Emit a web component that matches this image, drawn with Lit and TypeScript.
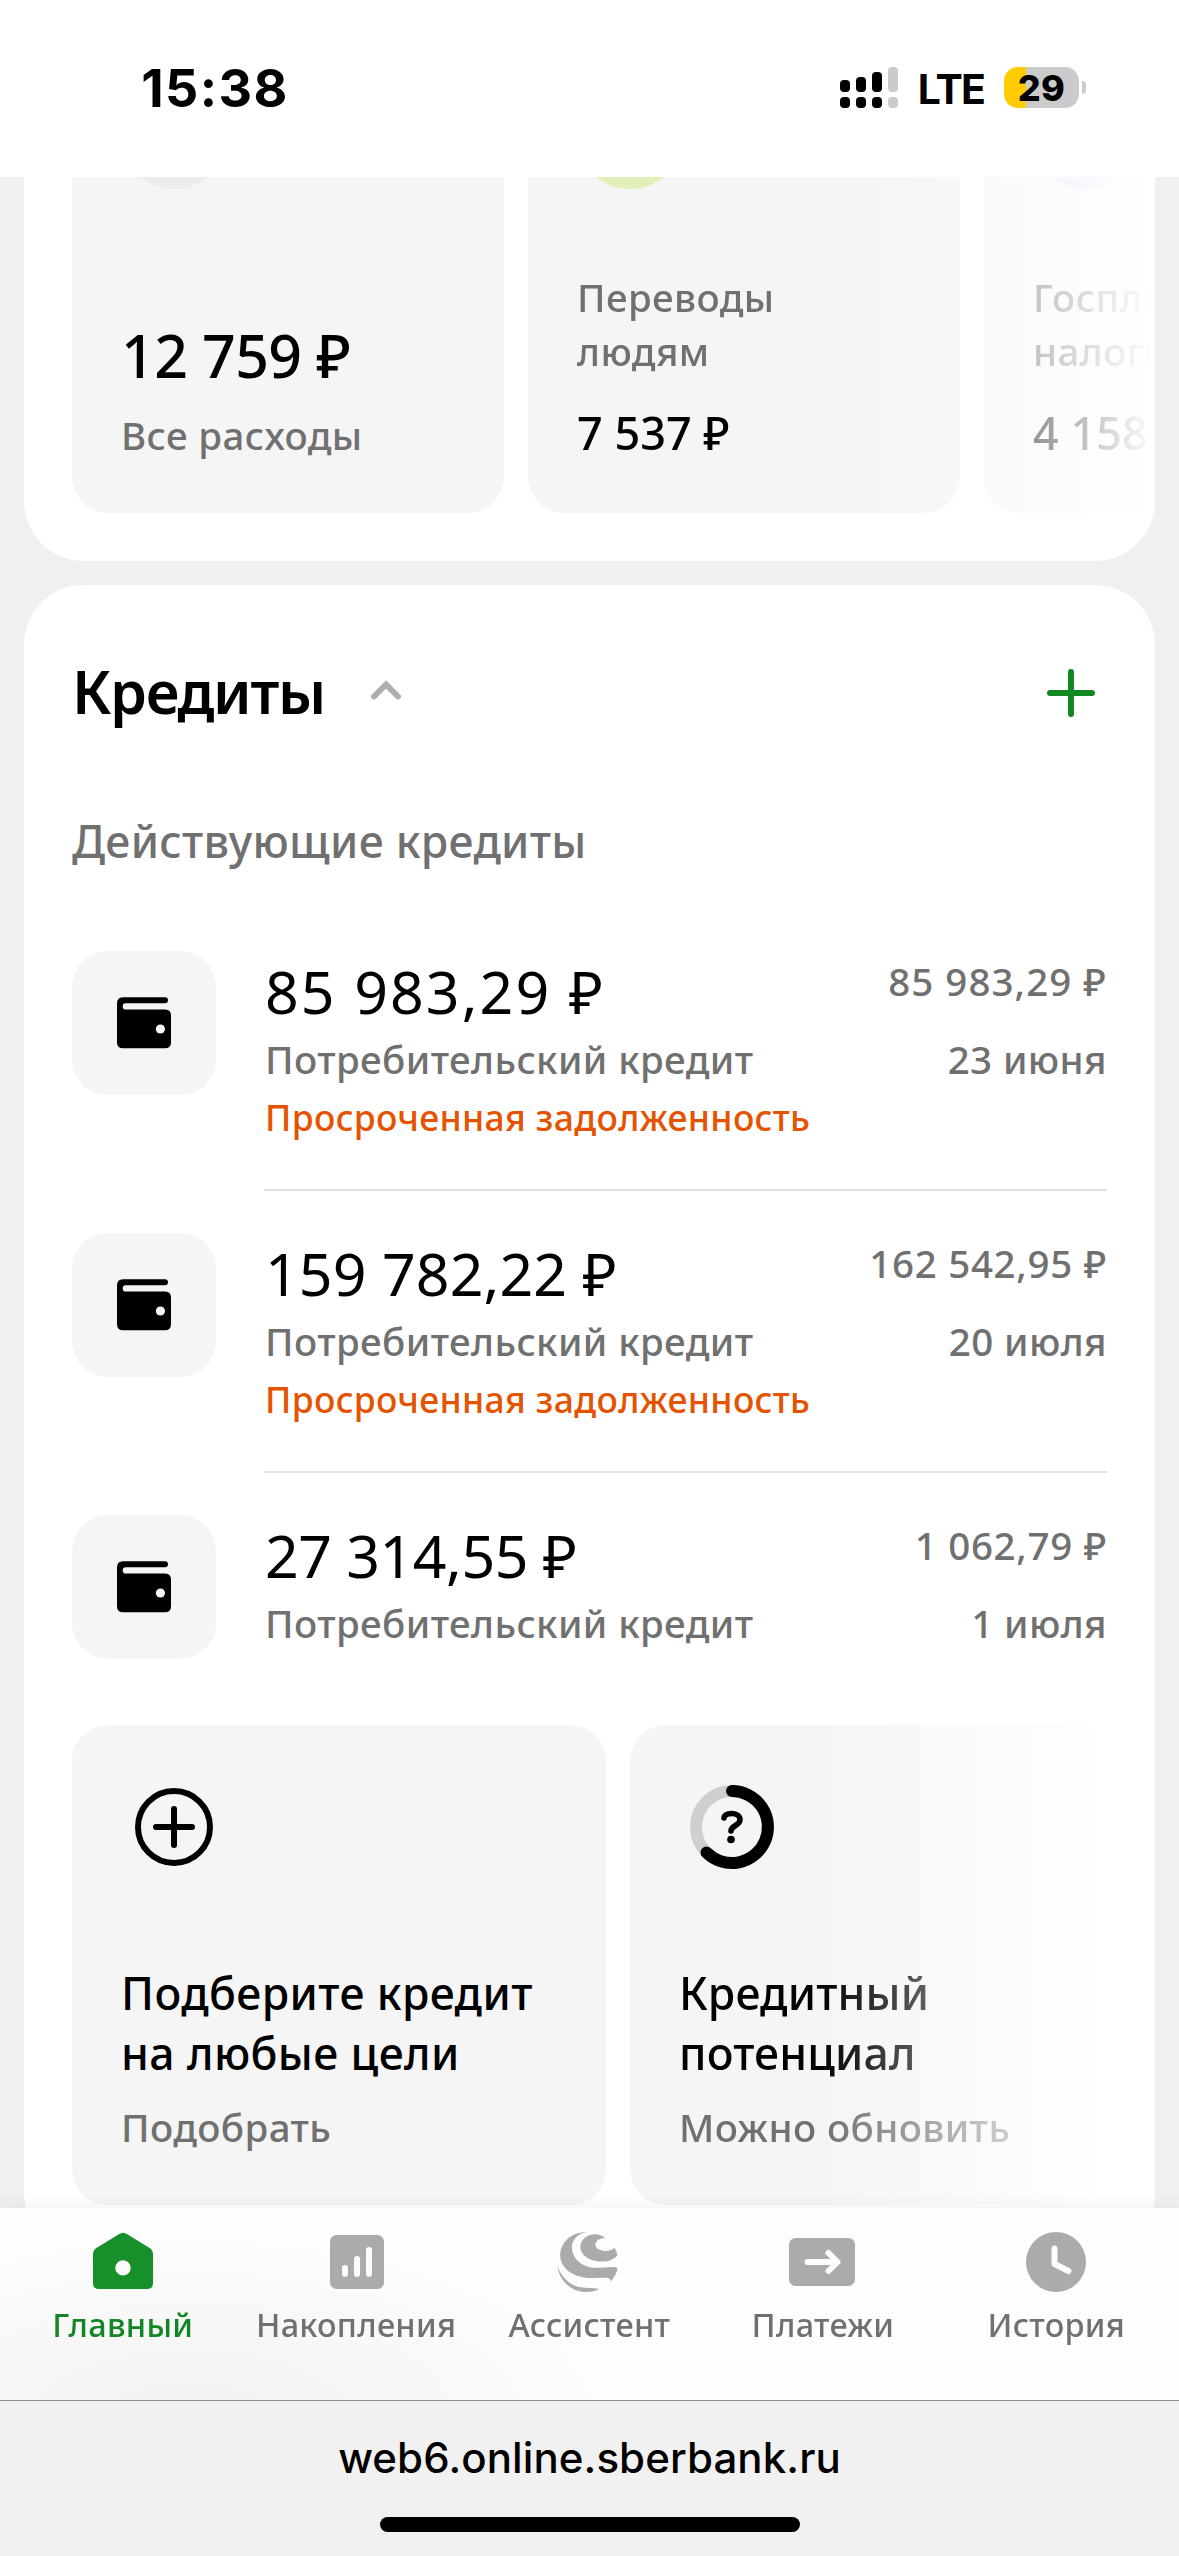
import { LitElement, html, css, svg } from "lit";
import { customElement } from "lit/decorators.js";
import { classMap } from "lit/directives/class-map.js";

interface Loan {
  amount: string;
  due: string;
  date: string;
  overdue: boolean;
}

const loans: Loan[] = [
  { amount: "85 983,29 ₽", due: "85 983,29 ₽", date: "23 июня", overdue: true },
  { amount: "159 782,22 ₽", due: "162 542,95 ₽", date: "20 июля", overdue: true },
  { amount: "27 314,55 ₽", due: "1 062,79 ₽", date: "1 июля", overdue: false },
];

const tabs = [
  {
    label: "Главный",
    active: true,
    icon: svg`<path fill-rule="evenodd" d="M31.8 8.2Q36 5.2 40.2 8.2L62.6 21.9Q66 24.2 66 28V57Q66 63 60 63H12Q6 63 6 57V28Q6 24.2 9.4 21.9ZM36 34.2A7.7 7.7 0 1 0 36 49.6A7.7 7.7 0 1 0 36 34.2Z"/>`,
  },
  {
    label: "Накопления",
    active: false,
    icon: svg`<rect x="10" y="9" width="54" height="54" rx="6.5"/><path class="cut" d="M25 42V48M37 33V48M49 24V48"/>`,
  },
  {
    label: "Ассистент",
    active: false,
    icon: svg`<g transform="translate(-8.5 -6) scale(.33333)"><path d="M183 55C165 38 138 40 121 53C103 67 103 92 121 108C140 125 172 128 194 122C206 118 214 112 219 105C217 97 214 90 210 83C200 92 184 95 170 91C156 87 149 76 155 66C160 57 171 54 183 55Z"/><path d="M128 37C83 34 47 66 47 107C49 148 90 173 138 174C166 175 189 171 196 177Q200 180 198 186C209 172 216 160 219 147Q219 142 212 141C186 140 165 145 143 143C108 138 82 113 82 82C83 59 99 40 128 37Z"/><path d="M39 140C45 184 84 216 125 216C140 216 154 213 164 207C148 203 127 205 109 202C79 197 53 174 39 140Z"/></g>`,
  },
  {
    label: "Платежи",
    active: false,
    icon: svg`<rect x="2" y="12" width="66" height="48" rx="6.5"/><path class="cut" d="M20.5 36H50M41.5 27L50.5 36L41.5 45"/>`,
  },
  {
    label: "История",
    active: false,
    icon: svg`<circle cx="36" cy="36" r="30"/><path class="cut" d="M34.5 22.5V38L48.5 45"/>`,
  },
];

@customElement("app-root")
export class AppRoot extends LitElement {
  static styles = css`
    :host {
      display: flex;
      flex-direction: column;
      width: 1179px;
      height: 2556px;
      overflow: hidden;
      background: #f0f0f0;
      color: #000;
      font-family: "Noto Sans", "Open Sans", sans-serif;
      font-weight: 500;
      white-space: nowrap;
    }
    svg {
      display: block;
      flex: none;
    }

    .status {
      display: flex;
      flex: none;
      align-items: center;
      justify-content: space-between;
      height: 177px;
      box-sizing: border-box;
      padding: 0 93px 0 130px;
      background: #fff;
      font-family: Inter, sans-serif;
    }
    .time {
      width: 170px;
      text-align: center;
      font-size: 52px;
      font-weight: 750;
      letter-spacing: 1.4px;
    }
    .indicators {
      display: flex;
      align-items: center;
    }
    .signal,
    .battery,
    .nub {
      margin-bottom: 2px;
    }
    .lte {
      width: 106px;
      text-align: center;
      font-size: 41px;
      font-weight: 650;
      letter-spacing: -1.8px;
    }
    .battery {
      width: 75px;
      height: 41px;
      line-height: 42px;
      border-radius: 14px;
      background: linear-gradient(to right, #ffcc00 22px, #cbcbcb 22px);
      text-align: center;
      font-size: 36px;
      font-weight: 800;
      letter-spacing: 0.4px;
    }
    .nub {
      width: 4px;
      height: 13px;
      margin-left: 3px;
      border-radius: 0 5px 5px 0;
      background: #cbcbcb;
    }

    .content {
      display: flex;
      flex: 1;
      flex-direction: column;
      gap: 24px;
      min-height: 0;
      padding: 0 24px;
      overflow: hidden;
    }
    .card {
      flex: none;
      box-sizing: border-box;
      overflow: hidden;
      background: #fff;
    }
    .spending {
      height: 384px;
      padding: 0 0 48px 48px;
      border-radius: 0 0 60px 60px;
    }
    .credits {
      height: 1668px;
      padding: 70px 48px 48px;
      border-radius: 60px;
    }

    .carousel {
      display: flex;
      gap: 24px;
      overflow: hidden;
      -webkit-mask-image: linear-gradient(to right, #000 calc(100% - 288px), transparent);
      mask-image: linear-gradient(to right, #000 calc(100% - 288px), transparent);
    }
    .tile {
      display: flex;
      flex: none;
      flex-direction: column;
      box-sizing: border-box;
      background: #f5f5f5;
      overflow: hidden;
    }
    .category {
      width: 432px;
      height: 336px;
      padding: 0 40px 51px 49px;
      border-radius: 0 0 36px 36px;
    }
    .badge {
      width: 108px;
      height: 108px;
      margin: -96px 0 auto -1px;
      border-radius: 50%;
      background: #ececec;
    }
    .badge.people {
      background: #e0f0b8;
    }
    .badge.state {
      background: #e6e1fb;
    }
    .total {
      margin-bottom: 23px;
      font-size: 59px;
      line-height: 60px;
      font-weight: 550;
      letter-spacing: -0.6px;
    }
    .muted {
      color: #707070;
      font-size: 38.5px;
      line-height: 54px;
      letter-spacing: 0.4px;
    }
    .sum {
      margin: 25px 0 -1px;
      font-size: 45px;
      line-height: 60px;
      font-weight: 500;
    }

    .head {
      display: flex;
      align-items: center;
      height: 72px;
    }
    .title {
      margin: 0 37px 0 0;
      font-size: 59px;
      line-height: 72px;
      font-weight: 600;
      letter-spacing: -1.3px;
    }
    .add {
      margin: 4px 0 0 auto;
    }
    .subtitle {
      margin: 84px 0 80px;
      color: #707070;
      font-size: 44.5px;
      line-height: 60px;
      letter-spacing: 0.3px;
    }
    .loans {
      display: flex;
      flex-direction: column;
      gap: 42px;
      margin-bottom: 66px;
    }
    .loan {
      display: flex;
      gap: 48px;
      height: 240px;
    }
    .loan:last-child {
      height: 144px;
    }
    .wallet {
      border-radius: 36px;
      background: #f5f5f5;
    }
    .body {
      display: flex;
      flex: 1;
      justify-content: space-between;
      box-sizing: border-box;
      border-bottom: 2px solid #e0e0e0;
    }
    .loan:last-child .body {
      border-bottom: 0;
    }
    .info {
      padding: 4px 0 0 1px;
    }
    .amount {
      margin-bottom: 5px;
      font-size: 59px;
      line-height: 72px;
      font-weight: 400;
      letter-spacing: 2.1px;
    }
    .loan:nth-child(2) .amount {
      letter-spacing: 0.1px;
    }
    .loan:nth-child(3) .amount {
      letter-spacing: -0.5px;
    }
    .overdue {
      margin-top: 4px;
      color: #e55300;
      font-size: 35.5px;
      line-height: 54px;
      letter-spacing: 0.35px;
    }
    .payment {
      padding-top: 3px;
      text-align: right;
    }
    .due {
      margin-bottom: 24px;
      letter-spacing: 1.05px;
    }
    .loan:nth-child(n + 2) .due {
      letter-spacing: 0.7px;
    }

    .offer {
      width: 534px;
      height: 480px;
      padding: 48px 40px 48px 49px;
      border-radius: 36px;
    }
    .offer svg {
      margin-left: -1px;
    }
    .offer-title {
      margin: 82px 0 17px;
      font-size: 44.5px;
      line-height: 60px;
      font-weight: 500;
      letter-spacing: 0.4px;
    }
    .offer:last-child .offer-title {
      letter-spacing: 0.15px;
    }

    .tabs {
      position: relative;
      display: grid;
      flex: none;
      grid-template-columns: repeat(5, 1fr);
      height: 192px;
      box-sizing: border-box;
      padding: 18px 6px 0;
      background: radial-gradient(420px 190px at 190px 215px, #f1f1f1, #f5f5f5 35%, #fdfdfd);
      box-shadow: 0 0 18px rgba(0, 0, 0, 0.07);
    }
    .tab {
      display: flex;
      flex-direction: column;
      align-items: center;
      gap: 6px;
      color: #707070;
      font-size: 32.5px;
      line-height: 42px;
      letter-spacing: 0.25px;
    }
    .tab svg {
      fill: #ababab;
    }
    .tab.active {
      color: #128624;
    }
    .tab.active svg {
      fill: #178f2b;
    }
    .cut {
      fill: none;
      stroke: #fdfdfd;
      stroke-width: 6;
      stroke-linecap: round;
      stroke-linejoin: round;
    }

    .browser {
      position: relative;
      display: flex;
      flex: none;
      flex-direction: column;
      align-items: center;
      height: 156px;
      box-sizing: border-box;
      padding-top: 30px;
      border-top: 1px solid #8f8f8f;
      background: #f1f1f1;
    }
    .url {
      font-family: Inter, sans-serif;
      font-size: 42px;
      line-height: 54px;
      font-weight: 500;
      letter-spacing: 0.1px;
    }
    .home-bar {
      width: 420px;
      height: 15px;
      margin-top: 32px;
      border-radius: 8px;
      background: #000;
    }
  `;

  private renderLoan(loan: Loan) {
    return html`
      <div class="loan">
        <svg class="wallet" width="144" height="144" viewBox="0 0 144 144">
          <path
            d="M51 46.3H93A3 3 0 0 1 93 52.3H53.8A3 3 0 0 0 53.8 58.5H93Q99 58.5 99 64.5V91.3Q99 97.3 93 97.3H51Q45 97.3 45 91.3V52.3Q45 46.3 51 46.3Z"
          />
          <circle cx="88.4" cy="78" r="4.6" fill="#f5f5f5" />
        </svg>
        <div class="body">
          <div class="info">
            <div class="amount">${loan.amount}</div>
            <div class="muted">Потребительский кредит</div>
            ${loan.overdue ? html`<div class="overdue">Просроченная задолженность</div>` : null}
          </div>
          <div class="payment">
            <div class="muted due">${loan.due}</div>
            <div class="muted">${loan.date}</div>
          </div>
        </div>
      </div>
    `;
  }

  render() {
    return html`
      <header class="status">
        <div class="time">15:38</div>
        <div class="indicators">
          <svg class="signal" width="58" height="41" viewBox="0 0 58 41">
            <rect x="0" y="13" width="10" height="12" rx="4" />
            <rect x="16" y="10" width="10" height="15" rx="4" />
            <rect x="32" y="5" width="10" height="20" rx="4" />
            <rect x="0" y="30" width="10" height="11" rx="4" />
            <rect x="16" y="30" width="10" height="11" rx="4" />
            <rect x="32" y="30" width="10" height="11" rx="4" />
            <rect x="48" y="0" width="10" height="25" rx="4" fill="#cbcbcb" />
            <rect x="48" y="30" width="10" height="11" rx="4" fill="#cbcbcb" />
          </svg>
          <div class="lte">LTE</div>
          <div class="battery">29</div>
          <div class="nub"></div>
        </div>
      </header>

      <main class="content">
        <section class="card spending">
          <div class="carousel">
            <div class="tile category">
              <div class="badge"></div>
              <div class="total">12 759 ₽</div>
              <div class="muted">Все расходы</div>
            </div>
            <div class="tile category">
              <div class="badge people"></div>
              <div class="muted">Переводы<br />людям</div>
              <div class="sum">7 537 ₽</div>
            </div>
            <div class="tile category">
              <div class="badge state"></div>
              <div class="muted">Госпла<br />налоги</div>
              <div class="sum">4 158</div>
            </div>
          </div>
        </section>

        <section class="card credits">
          <div class="head">
            <h2 class="title">Кредиты</h2>
            <svg width="48" height="48" viewBox="0 0 48 48" fill="none" stroke="#aeaeae" stroke-width="6" stroke-linecap="round">
              <path d="M12 29.5L24 17.5L36 29.5" />
            </svg>
            <svg class="add" width="72" height="72" viewBox="0 0 72 72" fill="none" stroke="#118821" stroke-width="6" stroke-linecap="round">
              <path d="M36 15V57M15 36H57" />
            </svg>
          </div>
          <div class="subtitle">Действующие кредиты</div>
          <div class="loans">${loans.map((loan) => this.renderLoan(loan))}</div>
          <div class="carousel">
            <div class="tile offer">
              <svg width="108" height="108" viewBox="0 0 108 108" fill="none" stroke="#000" stroke-width="6" stroke-linecap="round">
                <circle cx="54" cy="54" r="36" />
                <path d="M54 36V72M36 54H72" />
              </svg>
              <div class="offer-title">Подберите кредит<br />на любые цели</div>
              <div class="muted">Подобрать</div>
            </div>
            <div class="tile offer">
              <svg width="108" height="108" viewBox="0 0 108 108" fill="none" stroke="#000" stroke-linecap="round">
                <circle cx="54" cy="54" r="36" stroke="#cfcfcf" stroke-width="12" />
                <path d="M54 18A36 36 0 1 1 28.5 79.5" stroke-width="12" />
                <path d="M46 45C46.5 41.5 49.5 40.5 54 40.5C59 40.5 62 43.5 62 47C62 52.5 53 52.5 53 58" stroke-width="5.6" />
                <circle cx="53" cy="66.5" r="3.8" fill="#000" stroke="none" />
              </svg>
              <div class="offer-title">Кредитный<br />потенциал</div>
              <div class="muted">Можно обновить</div>
            </div>
          </div>
        </section>
      </main>

      <nav class="tabs">
        ${tabs.map(
          (tab) => html`
            <div class=${classMap({ tab: true, active: tab.active })}>
              <svg width="72" height="72" viewBox="0 0 72 72">${tab.icon}</svg>
              <span>${tab.label}</span>
            </div>
          `,
        )}
      </nav>

      <footer class="browser">
        <div class="url">web6.online.sberbank.ru</div>
        <div class="home-bar"></div>
      </footer>
    `;
  }
}
